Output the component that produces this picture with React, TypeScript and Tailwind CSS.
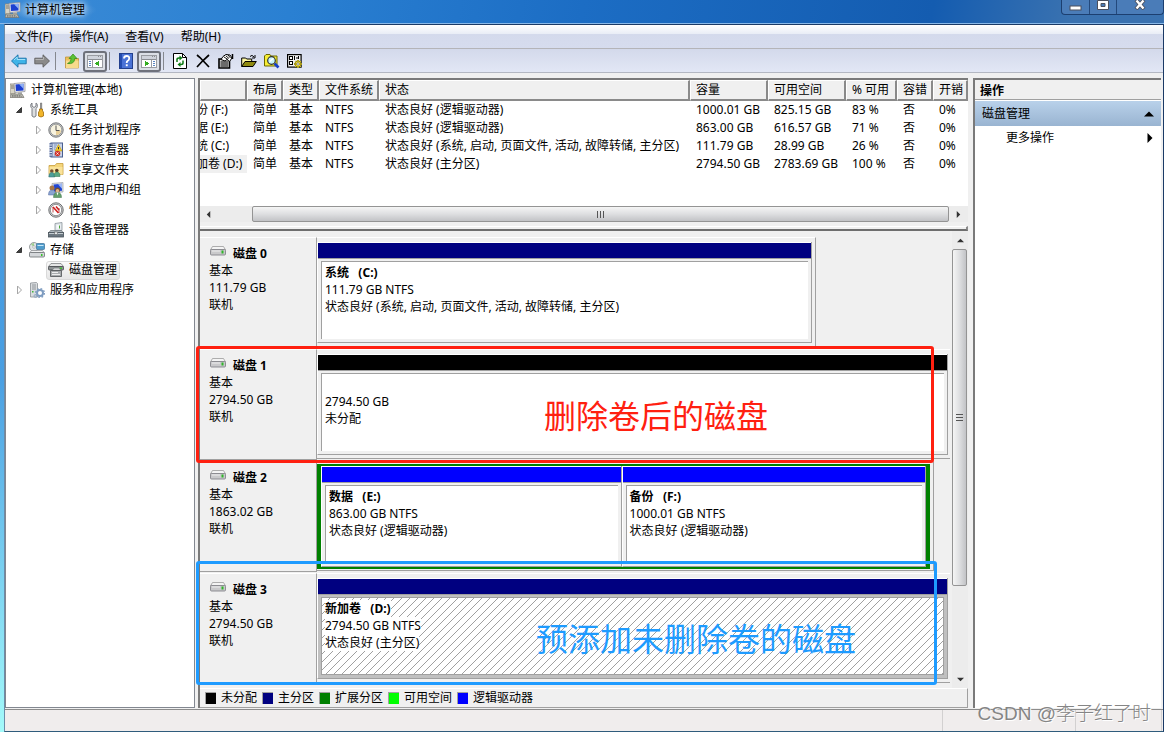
import { Fragment, type ReactNode } from 'react';

/* ---------- icons ---------- */

function ComputerIcon() {
  return (
    <svg viewBox="0 0 16 16" className="size-4 shrink-0" aria-hidden="true">
      <rect x="0" y="2" width="5" height="10" fill="#d8d4c6" stroke="#8a877c" strokeWidth=".8" />
      <path d="M1 4h3M1 6h3" stroke="#77756b" />
      <path d="M4 1.5l11-1v9l-10 1z" fill="#e8e8ea" stroke="#9a9aa0" strokeWidth=".8" />
      <path d="M5.5 2.5l8-.7v6.6l-7.5.7z" fill="#1c3fd0" />
      <path d="M9 2.3l4.5-.5v5z" fill="#8fb0f4" />
      <path d="M8 10h4v2H8z" fill="#b5b5b5" />
      <path d="M1 12h11l2 3.5H0z" fill="#b9b8b0" stroke="#77766f" strokeWidth=".7" />
      <path d="M2 13.5h9M2 14.7h10" stroke="#6d6d68" strokeWidth=".7" strokeDasharray="1.5 .8" />
    </svg>
  );
}

function ToolsIcon() {
  return (
    <svg viewBox="0 0 16 16" className="size-4 shrink-0" aria-hidden="true">
      <path d="M3 1v3l2 1.5L7 4V1c1.8 1 2 4.200 0 5.500V14q-2 2.500-4 0V6.500C1.200 5 1.200 2 3 1z" fill="#dcdee0" stroke="#6f7378" strokeWidth=".9" />
      <path d="M11.500 1h1.200v6h-1.200z" fill="#9a9a9a" stroke="#666" strokeWidth=".6" />
      <path d="M10.500 7h3v2l1 1v4q-2.500 2-5 0v-4l1-1z" fill="#f1b52a" stroke="#a06c0c" strokeWidth=".8" />
    </svg>
  );
}

function ClockIcon() {
  return (
    <svg viewBox="0 0 16 16" className="size-4 shrink-0" aria-hidden="true">
      <circle cx="8" cy="8" r="7.200" fill="#c6c8ca" stroke="#77797b" />
      <circle cx="8" cy="8" r="5.800" fill="#f8f3df" stroke="#8e9092" strokeWidth=".8" />
      <path d="M8 8.500h5A5 5 0 0 1 8 13z" fill="#e8cf98" />
      <path d="M8 3.500V8.500h3.500" stroke="#555" fill="none" />
    </svg>
  );
}

function EventIcon() {
  return (
    <svg viewBox="0 0 16 16" className="size-4 shrink-0" aria-hidden="true">
      <rect x="3" y="1" width="11.500" height="14" fill="#c9d5ea" stroke="#4a5f90" />
      <rect x="1.500" y="1" width="3" height="14" fill="#5b6f9e" />
      <path d="M1 3h3M1 5.500h3M1 8h3M1 10.500h3M1 13h3" stroke="#dfe5f2" />
      <path d="M6 3h3M6 5h2M6 7h1M6 13h1" stroke="#7085b4" strokeWidth=".8" />
      <path d="M10.500 2.500L14 9H7z" fill="#f5cd28" stroke="#b99412" strokeWidth=".6" />
      <path d="M10.500 5v2.300" stroke="#333" />
      <circle cx="9.500" cy="11.500" r="2.800" fill="#d0342c" />
      <path d="M8.500 10.500l2 2m0-2l-2 2" stroke="#fff" strokeWidth=".9" />
    </svg>
  );
}

function SharedFolderIcon() {
  return (
    <svg viewBox="0 0 16 16" className="size-4 shrink-0" aria-hidden="true">
      <path d="M1 3.500h6L8.500 1.500H15v11H1z" fill="#f4d57a" stroke="#c79d3c" strokeWidth=".8" />
      <path d="M1.500 5H14.500v7.500h-13z" fill="#f9e29a" />
      <circle cx="3.800" cy="9" r="1.800" fill="#7a5232" />
      <circle cx="8.800" cy="8.500" r="1.800" fill="#5c3c22" />
      <path d="M.8 15q0-4.500 3-4.500t3 4.500z" fill="#4d9e9a" stroke="#2f6a70" strokeWidth=".5" />
      <path d="M6 14.500q0-4.500 3-4.500t3 4.500z" fill="#5aa884" stroke="#2f7050" strokeWidth=".5" />
    </svg>
  );
}

function UsersIcon() {
  return (
    <svg viewBox="0 0 16 16" className="size-4 shrink-0" aria-hidden="true">
      <path d="M4 1.500l11-1v9.500l-10 .5z" fill="#dfe2e8" stroke="#9a9ea8" strokeWidth=".7" />
      <path d="M5.500 2.500l8.500-.7v7l-8 .6z" fill="#2046d2" />
      <path d="M10 2.200l4-.4v5z" fill="#9cb8f6" />
      <circle cx="4" cy="6" r="2.500" fill="#a87746" />
      <path d="M.5 13q0-5 3.500-5t3.500 5z" fill="#8ba4d2" stroke="#52699c" strokeWidth=".5" />
      <circle cx="9.500" cy="8" r="2.500" fill="#79502c" />
      <circle cx="9.500" cy="8.700" r="1.700" fill="#e0b48a" />
      <path d="M5.500 15.500q0-5 4-5t4 5z" fill="#63a06c" stroke="#3f7048" strokeWidth=".5" />
      <path d="M8.500 10.500h2l-1 3z" fill="#fff" />
    </svg>
  );
}

function PerformanceIcon() {
  return (
    <svg viewBox="0 0 16 16" className="size-4 shrink-0" aria-hidden="true">
      <circle cx="8" cy="8" r="7.200" fill="#d3d4d5" stroke="#6c6e70" />
      <circle cx="8" cy="8" r="5.700" fill="#fff" stroke="#77797b" strokeWidth=".8" />
      <path d="M5 10.500V5M11 11V6" stroke="#b24040" fill="none" strokeWidth=".9" />
      <path d="M5 5l5.500 6M8 4.500l3 3.500" stroke="#cf2020" strokeWidth="1.600" />
    </svg>
  );
}

function DeviceIcon() {
  return (
    <svg viewBox="0 0 16 16" className="size-4 shrink-0" aria-hidden="true">
      <path d="M7 1.500l7-1v8H7z" fill="#dfe5ea" stroke="#8b949b" strokeWidth=".8" />
      <path d="M8.500 3l4-.6v4.300h-4z" fill="#f6f8fa" />
      <path d="M11.500 3.500v3" stroke="#49a53a" />
      <path d="M2.500 8.500h11L15.500 11H.5z" fill="#aeb7bd" stroke="#6a7379" strokeWidth=".7" />
      <rect x=".5" y="10.500" width="15" height="4.500" fill="#6b7780" stroke="#49535a" strokeWidth=".8" />
      <path d="M1 11.500h14" stroke="#c3cbd0" />
      <rect x="6.500" y="10" width="3" height="2.500" fill="#e7eaec" stroke="#555" strokeWidth=".5" />
    </svg>
  );
}

function StorageIcon() {
  return (
    <svg viewBox="0 0 16 16" className="size-4 shrink-0" aria-hidden="true">
      <circle cx="5" cy="5" r="4.500" fill="#dfe4e6" stroke="#84898c" strokeWidth=".8" />
      <path d="M5 5L2 2.500A4 4 0 0 1 5 1z" fill="#9fd18f" />
      <circle cx="5" cy="5" r="1.300" fill="#fff" stroke="#888" strokeWidth=".5" />
      <rect x="7.500" y="1.500" width="8" height="6" rx=".8" fill="#4f9ccc" stroke="#3a6f96" strokeWidth=".7" />
      <path d="M8.500 3.500h6" stroke="#c7e6f7" />
      <path d="M2.500 8.500h11l2 2.500H.5z" fill="#f0f1f2" stroke="#898d90" strokeWidth=".7" />
      <rect x=".5" y="10.500" width="15" height="4.500" rx="1" fill="#d4d7da" stroke="#696e72" strokeWidth=".8" />
      <rect x="12" y="12" width="1.500" height="2" fill="#37c52a" />
    </svg>
  );
}

function DiskManagementIcon() {
  return (
    <svg viewBox="0 0 16 16" className="size-4 shrink-0" aria-hidden="true">
      <path d="M3 1.500h10l2.500 3H.5z" fill="#e5e6e6" stroke="#707375" strokeWidth=".7" />
      <rect x=".5" y="4.500" width="15" height="3.500" rx=".8" fill="#8e9294" stroke="#45494b" strokeWidth=".8" />
      <rect x="11.500" y="5.500" width="2.500" height="1.500" fill="#3dbd30" />
      <path d="M4 8.500L6 6h5l2 2.500z" fill="#d5d7d8" stroke="#707375" strokeWidth=".6" />
      <path d="M2.500 8.500h11v6h-11z" fill="#a9acae" stroke="#4d5153" strokeWidth=".8" />
      <path d="M4 10.500h6M4 12.500h8" stroke="#eceded" />
    </svg>
  );
}

function ServicesIcon() {
  return (
    <svg viewBox="0 0 16 16" className="size-4 shrink-0" aria-hidden="true">
      <path d="M1.500 1l6-.5 1 1v13.500h-7z" fill="#d9dcdf" stroke="#8a8f94" strokeWidth=".8" />
      <path d="M3 3h4M3 5h4M3 7h4" stroke="#7d8388" strokeWidth=".8" />
      <rect x="3" y="9" width="1.500" height="1.500" fill="#3fb33a" />
      <circle cx="11" cy="11" r="3" fill="none" stroke="#7e9cc0" strokeWidth="2" />
      <circle cx="11" cy="11" r="4.400" fill="none" stroke="#7e9cc0" strokeWidth="1.300" strokeDasharray="1.700 1.750" />
      <circle cx="6.500" cy="14" r="1.500" fill="none" stroke="#93a9c4" />
    </svg>
  );
}

function DriveIcon() {
  return (
    <svg viewBox="0 0 16 10" className="h-[10px] w-4 shrink-0" aria-hidden="true">
      <path d="M2.500.5h11l2 3.500H.5z" fill="#f4f4f4" stroke="#9b9b9b" strokeWidth=".8" />
      <rect x=".5" y="3.500" width="15" height="5.500" rx="1" fill="#c9c9cb" stroke="#85858a" strokeWidth=".9" />
      <path d="M2 5h8" stroke="#ededee" />
      <rect x="11.500" y="4.500" width="2" height="3" fill="#2fb529" />
    </svg>
  );
}

function ArrowIcon({ forward = false }: { forward?: boolean }) {
  return (
    <svg viewBox="0 0 16 14" className="h-[14px] w-4" aria-hidden="true">
      {forward ? (
        <path d="M15.500 7L9 .8v3.400H.8v5.600H9v3.400z" fill="#8a8a8a" stroke="#5e5e5e" strokeWidth=".9" />
      ) : (
        <path d="M.5 7L7 .8v3.400h8.200v5.600H7v3.400z" fill="#3fb4e8" stroke="#1770a8" strokeWidth=".9" />
      )}
      <path d={forward ? 'M1.500 5.500H9.500V3' : 'M3 6l3.200-3v2.500h8'} fill="none" stroke={forward ? '#b5b5b5' : '#a5e2fa'} />
    </svg>
  );
}

function UpFolderIcon() {
  return (
    <svg viewBox="0 0 16 16" className="size-4" aria-hidden="true">
      <path d="M1.500 4h5l1 1.500h7V15h-13z" fill="#eec05c" stroke="#b88a2c" strokeWidth=".7" />
      <path d="M2 7.500h12.500V15H2z" fill="#f8db8c" />
      <path d="M3.500 10.500q3.500-1 3.700-5H5L9 1l4 4.500h-2.300Q10.500 11.500 3.500 10.500z" fill="#5cc236" stroke="#2f8a18" strokeWidth=".7" />
    </svg>
  );
}

function PaneIcon({ right = false }: { right?: boolean }) {
  return (
    <svg viewBox="0 0 16 13" className="h-[13px] w-4" aria-hidden="true" shapeRendering="crispEdges">
      <rect x=".5" y=".5" width="15" height="12" fill="#fff" stroke="#9a9ca2" />
      <path d="M1 2.500h14" stroke="#d0d3db" strokeWidth="3" />
      <path d="M11 1.500h1M13 1.500h1M1 4.500h14" stroke="#8b8d92" />
      {right ? <path d="M10.500 5v7" stroke="#9a9ca2" /> : <path d="M5.500 5v7" stroke="#9a9ca2" />}
      {right ? (
        <path d="M12 6.500h2M12 8.500h2M12 10.500h2" stroke="#5b86c4" />
      ) : (
        <path d="M2 6.500h2M2 8.500h2M2 10.500h2" stroke="#5b86c4" />
      )}
      <path d={right ? 'M4 5.500v6l4-3z' : 'M12 5.500v6L8 8.500z'} fill="#35ad22" />
    </svg>
  );
}

function HelpIcon() {
  return (
    <svg viewBox="0 0 14 16" className="h-4 w-[14px]" aria-hidden="true">
      <rect x=".5" y=".5" width="13" height="15" fill="#4a72d6" stroke="#23408e" />
      <rect x="1" y="1" width="2" height="14" fill="#234bb0" />
      <path d="M5 5.500q0-2.500 2.700-2.500T10.200 5.500Q10.200 7 8.500 8q-.8.600-.8 2" fill="none" stroke="#fff" strokeWidth="1.800" />
      <rect x="6.800" y="11.300" width="1.900" height="1.900" fill="#fff" />
    </svg>
  );
}

function RefreshIcon() {
  return (
    <svg viewBox="0 0 14 16" className="h-4 w-[14px]" aria-hidden="true">
      <path d="M.5.5h9l4 4v11H.5z" fill="#fff" stroke="#000" />
      <path d="M9.500.5v4h4" fill="none" stroke="#000" />
      <path d="M4 9V6.500q0-1.500 2-1.500h1M10 7.500V10q0 1.500-2 1.500H7" fill="none" stroke="#0b7a12" strokeWidth="1.500" />
      <path d="M6.500 2.500v5L9.500 5zM7.500 9v5L4.500 11.500z" fill="#0b7a12" />
    </svg>
  );
}

function DeleteIcon() {
  return (
    <svg viewBox="0 0 14 14" className="size-[14px]" aria-hidden="true">
      <path d="M1 1l3 2.500L13 13M13 1L7 6.500 1 13" fill="none" stroke="#000" strokeWidth="1.700" />
    </svg>
  );
}

function PropertiesIcon() {
  return (
    <svg viewBox="0 0 16 16" className="size-4" aria-hidden="true">
      <path d="M1 6h10.500v9H1z" fill="#d6d6d6" stroke="#000" strokeWidth="1.600" />
      <path d="M2.500 9h7.500M2.500 11h7.500M2.500 13h7.500" stroke="#000" />
      <path d="M3 6.500L5 3.500l3-2 4 .5 2 3-2.500 3.500L9 6.500 7 8z" fill="#fff" stroke="#000" />
      <path d="M6 4l4 2.500M8 3l3 2.500M10 2l2.500 3" stroke="#000" strokeWidth=".9" />
      <path d="M14.500 1v5" stroke="#000" strokeWidth="1.500" />
    </svg>
  );
}

function OpenIcon() {
  return (
    <svg viewBox="0 0 16 14" className="h-[14px] w-4" aria-hidden="true">
      <path d="M.7 12.500V4h4l1 1h5v3" fill="#fbf6a0" stroke="#000" />
      <path d="M.7 12.500L4 7.500h11.300L12 12.500z" fill="#8f8a10" stroke="#000" />
      <path d="M9 2.500q2-2.500 4 .5m1-2v3h-3" fill="none" stroke="#000" />
    </svg>
  );
}

function FindIcon() {
  return (
    <svg viewBox="0 0 16 16" className="size-4" aria-hidden="true">
      <path d="M.5 13V3L2 1.500h4L7 3h6V13z" fill="#f6ed35" stroke="#6d6800" />
      <circle cx="7.500" cy="7.500" r="3.800" fill="#c7f4fb" stroke="#303030" strokeWidth="1.200" />
      <path d="M6 8.500L9 5.500" stroke="#fff" strokeWidth="1.300" />
      <path d="M10.500 10.500l4 4" stroke="#1740c8" strokeWidth="2.600" />
    </svg>
  );
}

function SettingsIcon() {
  return (
    <svg viewBox="0 0 16 16" className="size-4" aria-hidden="true">
      <rect x=".6" y="1.600" width="13.500" height="12.500" fill="#f2f2f2" stroke="#000" strokeWidth="1.200" />
      <rect x="2.500" y="3.500" width="3" height="3" fill="#fff" stroke="#000" />
      <rect x="2.500" y="8.500" width="3" height="3" fill="#fff" stroke="#000" />
      <path d="M7.500 3v4M9 5h2M11.500 3v3" stroke="#000" />
      <path d="M11 7v8M7 11h8M8.300 8.300l5.400 5.400M13.700 8.300l-5.400 5.400" stroke="#5a5200" strokeWidth="2" />
      <path d="M11 7v8M7 11h8M8.300 8.300l5.400 5.400M13.700 8.300l-5.400 5.400" stroke="#f4e02c" strokeWidth="1.200" />
      <circle cx="11" cy="11" r="1.200" fill="#fff" stroke="#555" strokeWidth=".6" />
    </svg>
  );
}

function Triangle({ dir, className }: { dir: 'up' | 'down' | 'left' | 'right'; className: string }) {
  const shape = { up: 'M4 2L8 6H0z', down: 'M0 2h8L4 6z', left: 'M6 0v8L2 4z', right: 'M2 0l4 4-4 4z' }[dir];
  return (
    <svg viewBox="0 0 8 8" className={className} aria-hidden="true">
      <path d={shape} fill="currentColor" />
    </svg>
  );
}

/* ---------- toolbar ---------- */

function Tool({ label, pressed = false, children }: { label: string; pressed?: boolean; children: ReactNode }) {
  return (
    <button
      type="button"
      aria-label={label}
      aria-pressed={pressed || undefined}
      className={
        pressed
          ? 'flex h-[21px] w-6 items-center justify-center rounded-[3px] border-2 border-[#6e717b] bg-[#dcdfe6]'
          : 'flex h-[21px] w-[23px] items-center justify-center'
      }
    >
      {children}
    </button>
  );
}

function Separator() {
  return <div className="mr-1 ml-[2px] h-[18px] w-px bg-[#85888f]" />;
}

/* ---------- navigation tree ---------- */

type Node = { label: string; level: 0 | 1 | 2; state?: 'open' | 'closed'; icon: ReactNode; selected?: boolean };

const nodes: Node[] = [
  { label: '计算机管理(本地)', level: 0, icon: <ComputerIcon /> },
  { label: '系统工具', level: 1, state: 'open', icon: <ToolsIcon /> },
  { label: '任务计划程序', level: 2, state: 'closed', icon: <ClockIcon /> },
  { label: '事件查看器', level: 2, state: 'closed', icon: <EventIcon /> },
  { label: '共享文件夹', level: 2, state: 'closed', icon: <SharedFolderIcon /> },
  { label: '本地用户和组', level: 2, state: 'closed', icon: <UsersIcon /> },
  { label: '性能', level: 2, state: 'closed', icon: <PerformanceIcon /> },
  { label: '设备管理器', level: 2, icon: <DeviceIcon /> },
  { label: '存储', level: 1, state: 'open', icon: <StorageIcon /> },
  { label: '磁盘管理', level: 2, icon: <DiskManagementIcon />, selected: true },
  { label: '服务和应用程序', level: 1, state: 'closed', icon: <ServicesIcon /> },
];

const indents = { 0: 'pl-[2px]', 1: 'pl-[9px]', 2: 'pl-[28px]' };

function Tree() {
  return (
    <nav className="w-[190px] shrink-0 border border-[#828790] bg-white pt-px">
      <ul>
        {nodes.map((n) => (
          <li key={n.label} className={`flex h-5 items-center ${indents[n.level]}`}>
            {n.level > 0 && (
              <span className="flex w-3 shrink-0 items-center">
                {n.state === 'open' && (
                  <svg viewBox="0 0 8 8" className="size-2" aria-hidden="true">
                    <path d="M6.500 1.500v5h-5z" fill="#404040" stroke="#222" strokeWidth=".8" />
                  </svg>
                )}
                {n.state === 'closed' && (
                  <svg viewBox="0 0 8 10" className="h-[10px] w-2" aria-hidden="true">
                    <path d="M2.500 1l4 4-4 4z" fill="#fff" stroke="#a6a6a6" />
                  </svg>
                )}
              </span>
            )}
            <button
              type="button"
              className={
                n.selected
                  ? 'flex h-[19px] items-center gap-[5px] rounded-[3px] border border-[#d9d9d9] bg-gradient-to-b from-[#fafafa] to-[#e6e6e6] pr-[2px] pl-px whitespace-nowrap'
                  : 'flex h-5 items-center gap-[5px] px-[2px] whitespace-nowrap'
              }
            >
              {n.icon}
              {n.label}
            </button>
          </li>
        ))}
      </ul>
    </nav>
  );
}

/* ---------- volume table ---------- */

const columns = [
  { title: '', width: 'w-[47px]' },
  { title: '布局', width: 'w-[36px]' },
  { title: '类型', width: 'w-[36px]' },
  { title: '文件系统', width: 'w-[60px]' },
  { title: '状态', width: '' },
  { title: '容量', width: 'w-[78px]' },
  { title: '可用空间', width: 'w-[78px]' },
  { title: '% 可用', width: 'w-[51px]' },
  { title: '容错', width: 'w-[36px]' },
  { title: '开销', width: 'w-[35px]' },
];

const volumes = [
  ['备份 (F:)', '简单', '基本', 'NTFS', '状态良好 (逻辑驱动器)', '1000.01 GB', '825.15 GB', '83 %', '否', '0%'],
  ['数据 (E:)', '简单', '基本', 'NTFS', '状态良好 (逻辑驱动器)', '863.00 GB', '616.57 GB', '71 %', '否', '0%'],
  ['系统 (C:)', '简单', '基本', 'NTFS', '状态良好 (系统, 启动, 页面文件, 活动, 故障转储, 主分区)', '111.79 GB', '28.99 GB', '26 %', '否', '0%'],
  ['新加卷 (D:)', '简单', '基本', 'NTFS', '状态良好 (主分区)', '2794.50 GB', '2783.69 GB', '100 %', '否', '0%'],
];

function VolumeTable() {
  return (
    <table className="w-full table-fixed border-separate border-spacing-0 text-left">
      <colgroup>
        {columns.map((c) => (
          <col key={c.title} className={c.width} />
        ))}
      </colgroup>
      <thead>
        <tr className="h-[21px]">
          {columns.map((c) => (
            <th
              key={c.title}
              className="overflow-hidden border-t border-r-2 border-b-2 border-l border-t-white border-r-[#8a8a8a] border-b-[#8a8a8a] border-l-white bg-[#f0f0f0] p-0 pl-[5px] leading-[18px] font-normal whitespace-nowrap"
            >
              {c.title}
            </th>
          ))}
        </tr>
      </thead>
      <tbody>
        {volumes.map((row, r) => (
          <tr key={row[0]} className="h-[18px]">
            {row.map((cell, i) =>
              i === 0 ? (
                <td key={i} className={r === 3 ? 'overflow-hidden bg-[#f0f0f0] p-0' : 'overflow-hidden p-0'}>
                  <div className="-ml-4 leading-[18px] whitespace-nowrap">{cell}</div>
                </td>
              ) : (
                <td key={i} className="p-0 pl-[6px] leading-[18px] whitespace-nowrap">
                  {cell}
                </td>
              ),
            )}
          </tr>
        ))}
      </tbody>
    </table>
  );
}

function HorizontalScroll() {
  return (
    <div className="flex h-4 shrink-0 items-stretch bg-[#ececec]">
      <button type="button" aria-label="向左滚动" className="flex w-[17px] items-center justify-center text-[#333]">
        <Triangle dir="left" className="size-[7px]" />
      </button>
      <div className="ml-[35px] flex flex-1 items-center justify-center gap-[2px] rounded-[2px] border border-[#949494] bg-gradient-to-b from-[#f5f5f5] via-[#dedfe1] to-[#c2c3c6]">
        <span className="h-[7px] w-px bg-[#555]" />
        <span className="h-[7px] w-px bg-[#555]" />
        <span className="h-[7px] w-px bg-[#555]" />
      </div>
      <button type="button" aria-label="向右滚动" className="flex w-[19px] items-center justify-center text-[#333]">
        <Triangle dir="right" className="size-[7px]" />
      </button>
    </div>
  );
}

function VerticalScroll() {
  return (
    <div className="flex w-4 shrink-0 flex-col bg-[#ececec]">
      <button type="button" aria-label="向上滚动" className="flex h-[18px] items-center justify-center text-[#333]">
        <Triangle dir="up" className="size-[7px]" />
      </button>
      <div className="flex w-[15px] flex-[337_1_0%] flex-col items-center justify-center gap-[2px] rounded-[2px] border border-[#949494] bg-gradient-to-r from-[#f5f5f5] via-[#dedfe1] to-[#c2c3c6]">
        <span className="h-px w-[7px] bg-[#555]" />
        <span className="h-px w-[7px] bg-[#555]" />
        <span className="h-px w-[7px] bg-[#555]" />
      </div>
      <div className="flex-[86_1_0%]" />
      <button type="button" aria-label="向下滚动" className="flex h-[17px] items-center justify-center text-[#333]">
        <Triangle dir="down" className="size-[7px]" />
      </button>
    </div>
  );
}

/* ---------- graphical disk view ---------- */

function Partition({
  name,
  lines,
  bar,
  grow = 'flex-1',
  hatched = false,
}: {
  name?: string;
  lines: string[];
  bar: string;
  grow?: string;
  hatched?: boolean;
}) {
  return (
    <div className={`flex h-[101px] min-w-0 flex-col border-r border-b border-l border-r-[#a0a0a0] border-b-[#a0a0a0] border-l-white ${grow} ${hatched ? 'bg-[#c0c0c0]' : ''}`}>
      <div className={`h-[17px] shrink-0 border-t border-b border-t-white border-b-[#a0a0a0] ${bar}`} />
      <div className="flex flex-1 px-[3px] pt-[2px] pb-[3px]">
        <div
          className={
            hatched
              ? 'relative flex-1 overflow-hidden border border-[#a0a0a0] bg-white'
              : 'flex-1 overflow-hidden border-t border-l border-[#a0a0a0] bg-white'
          }
        >
          {hatched && (
            <svg className="absolute inset-0 size-full" aria-hidden="true" shapeRendering="crispEdges">
              <defs>
                <pattern id="hatch" width="8" height="8" patternUnits="userSpaceOnUse">
                  <path d="M0 7h1v1H0zM1 6h1v1H1zM2 5h1v1H2zM3 4h1v1H3zM4 3h1v1H4zM5 2h1v1H5zM6 1h1v1H6zM7 0h1v1H7z" fill="#a0a0a0" />
                </pattern>
              </defs>
              <rect width="100%" height="100%" fill="url(#hatch)" />
            </svg>
          )}
          <div className="relative flex flex-col items-start pt-[2px] pl-[3px] leading-[17px] whitespace-pre">
            {name ? (
              <b className={hatched ? 'bg-white' : ''}>{name}</b>
            ) : (
              <span className="h-[17px]" />
            )}
            {lines.map((l) => (
              <span key={l} className={hatched ? 'bg-white' : ''}>
                {l}
              </span>
            ))}
          </div>
        </div>
      </div>
    </div>
  );
}

function DiskRow({ name, size, children }: { name: string; size: string; children: ReactNode }) {
  return (
    <div className="relative flex h-28 items-start">
      <div className="h-[111px] w-[117px] shrink-0 border-t border-r border-b border-t-white border-r-[#a0a0a0] border-b-[#a0a0a0] pt-[7px] pl-[9px] leading-[17px]">
        <div className="flex h-[17px] gap-[7px]">
          <span className="pt-px pl-px">
            <DriveIcon />
          </span>
          <b>{name}</b>
        </div>
        <div>基本</div>
        <div>{size}</div>
        <div>联机</div>
      </div>
      {children}
    </div>
  );
}

function DiskView() {
  return (
    <div className="min-w-0 flex-1">
      <DiskRow name="磁盘 0" size="111.79 GB">
        <div className="flex h-[110px] flex-[499_1_0%] border-t border-r border-b border-t-white border-r-[#a0a0a0] border-b-[#a0a0a0] pt-1 pr-[3px]">
          <Partition name="系统   (C:)" lines={['111.79 GB NTFS', '状态良好 (系统, 启动, 页面文件, 活动, 故障转储, 主分区)']} bar="bg-[#000080]" />
        </div>
        <div className="flex-[135_1_0%]" />
      </DiskRow>

      <DiskRow name="磁盘 1" size="2794.50 GB">
        <div className="flex h-[110px] flex-1 border-t border-b border-t-white border-b-[#a0a0a0] pt-1 pr-[2px]">
          <Partition lines={['2794.50 GB', '未分配']} bar="bg-black" />
        </div>
        <div className="absolute -top-[3px] right-4 -left-[4px] z-10 h-[117px] rounded-[3px] border-[3px] border-[#ff2010]">
          <p className="pt-[43px] pl-[345px] text-[32px] leading-[48px] whitespace-nowrap text-[#ff2010]">删除卷后的磁盘</p>
        </div>
      </DiskRow>

      <DiskRow name="磁盘 2" size="1863.02 GB">
        <div className="flex h-[110px] flex-[618_1_0%] border-t border-r border-b border-t-white border-r-[#a0a0a0] border-b-[#a0a0a0] pt-[2px] pr-[3px]">
          <div className="flex h-[105px] min-w-0 flex-1 border-x-4 border-y-2 border-[#008000] bg-[#f0f0f0]">
            <Partition name="数据   (E:)" lines={['863.00 GB NTFS', '状态良好 (逻辑驱动器)']} bar="bg-[#0000ff]" grow="flex-[301_1_0%]" />
            <Partition name="备份   (F:)" lines={['1000.01 GB NTFS', '状态良好 (逻辑驱动器)']} bar="bg-[#0000ff]" grow="flex-[305_1_0%]" />
          </div>
        </div>
        <div className="flex-[16_1_0%]" />
      </DiskRow>

      <DiskRow name="磁盘 3" size="2794.50 GB">
        <div className="flex h-[110px] flex-1 border-t border-b border-t-white border-b-[#a0a0a0] pt-1 pr-[2px]">
          <Partition name="新加卷   (D:)" lines={['2794.50 GB NTFS', '状态良好 (主分区)']} bar="bg-[#000080]" hatched />
        </div>
        <div className="absolute -top-[12px] right-[13px] -left-[4px] z-10 h-[124px] rounded-[3px] border-[3px] border-[#1e9bff]">
          <p className="pt-[51px] pl-[337px] text-[32px] leading-[48px] whitespace-nowrap text-[#1e9bff]">预添加未删除卷的磁盘</p>
        </div>
      </DiskRow>
    </div>
  );
}

const legend = [
  { label: '未分配', color: 'bg-black' },
  { label: '主分区', color: 'bg-[#000080]' },
  { label: '扩展分区', color: 'bg-[#008000]' },
  { label: '可用空间', color: 'bg-[#00ff00]' },
  { label: '逻辑驱动器', color: 'bg-[#0000ff]' },
];

/* ---------- window ---------- */

export default function App() {
  return (
    <div className="flex min-h-screen flex-col bg-white pr-[2px] font-['Noto_Sans','Noto_Sans_CJK_SC',sans-serif] text-[12px] leading-4 text-black">
      <header className="flex h-6 shrink-0 items-start justify-between border-b border-[#8ab9e8] bg-[linear-gradient(100deg,#3b8bd6,#2a80d2_25%,#1c6dc4_50%,#145cb0_80%,#3a72b0_92%)] pl-[5px]">
        <h1 className="flex h-5 items-center gap-1 bg-[radial-gradient(closest-side,rgba(255,255,255,0.35),transparent)] pr-3">
          <ComputerIcon />
          <span className="[text-shadow:0_0_8px_#fff,0_0_5px_#cfe4fa]">计算机管理</span>
        </h1>
        <div className="flex h-[15px] rounded-b-[4px] border-x border-b border-[#1c3f70] bg-[#4a7cb8] text-white">
          <button type="button" aria-label="最小化" className="flex w-7 items-center justify-center border-r border-[#23497c]">
            <svg viewBox="0 0 13 10" className="h-[10px] w-[13px]" aria-hidden="true">
              <rect x="1" y="4" width="11" height="4" fill="#fff" stroke="#4b4f5c" />
            </svg>
          </button>
          <button type="button" aria-label="最大化" className="flex w-[27px] items-start justify-center border-r border-[#23497c]">
            <svg viewBox="0 0 12 10" className="h-[10px] w-3" aria-hidden="true">
              <path d="M.5.500h11v9H.5zM4 3.500v3h4v-3z" fill="#fff" fillRule="evenodd" stroke="#4b4f5c" />
            </svg>
          </button>
          <button type="button" aria-label="关闭" className="flex w-[46px] items-start justify-center">
            <svg viewBox="0 0 12 10" className="h-[10px] w-3" aria-hidden="true">
              <path d="M2 0l8 9M10 0L2 9" stroke="#4b4f5c" strokeWidth="4" />
              <path d="M2.500.500l7 8M9.500.500l-7 8" stroke="#fff" strokeWidth="2.400" />
            </svg>
          </button>
        </div>
      </header>

      <div className="flex flex-1 bg-gradient-to-b from-[#3f93dc] via-[#4a9fe2] to-[#a4fafa] pl-1">
        <div className="flex min-w-0 flex-1 flex-col border border-t-[#1b3a66] border-r-[#1b3a66] border-b-[#2f5c7c] border-l-[#6b8ba8] bg-[#f0f0f0]">
          <div className="flex h-6 shrink-0 items-center gap-[17px] border-b border-[#b4b4b8] bg-[linear-gradient(#ffffff,#e9edf6_9px,#d4daec_9px,#d6dcee)] pt-px pl-[10px]">
            {['文件(F)', '操作(A)', '查看(V)', '帮助(H)'].map((m) => (
              <button key={m} type="button">
                {m}
              </button>
            ))}
          </div>

          <div className="flex h-6 shrink-0 items-center border-b border-[#b3b7c2] bg-gradient-to-b from-[#d3d9eb] to-[#e2e7f5] pt-px pl-[2px]">
            <Tool label="后退">
              <ArrowIcon />
            </Tool>
            <Tool label="前进">
              <ArrowIcon forward />
            </Tool>
            <Separator />
            <Tool label="上一级">
              <UpFolderIcon />
            </Tool>
            <Tool label="显示或隐藏控制台树" pressed>
              <PaneIcon />
            </Tool>
            <Separator />
            <Tool label="帮助">
              <HelpIcon />
            </Tool>
            <Tool label="显示或隐藏操作窗格" pressed>
              <PaneIcon right />
            </Tool>
            <Separator />
            <Tool label="刷新">
              <RefreshIcon />
            </Tool>
            <Tool label="删除">
              <DeleteIcon />
            </Tool>
            <Tool label="属性">
              <PropertiesIcon />
            </Tool>
            <Tool label="打开">
              <OpenIcon />
            </Tool>
            <Tool label="查找">
              <FindIcon />
            </Tool>
            <Tool label="设置">
              <SettingsIcon />
            </Tool>
          </div>

          <div className="flex flex-1 pt-[5px] pr-[2px]">
            <Tree />

            <main className="ml-[3px] flex min-w-0 flex-1 flex-col border-t-2 border-l-2 border-[#7a7a7a]">
              <section className="flex h-[142px] flex-col overflow-hidden bg-white">
                <div className="flex-1">
                  <VolumeTable />
                </div>
                <HorizontalScroll />
              </section>
              <div className="mt-1 h-[5px] border-t border-r-2 border-b-2 border-t-white border-r-[#8a8a8a] border-b-[#6e6e6e]" />

              <section className="flex flex-1 pt-[6px]">
                <DiskView />
                <div className="-mt-[6px] flex pl-[2px]">
                  <VerticalScroll />
                </div>
              </section>

              <footer className="flex h-5 shrink-0 items-center gap-[5px] border-t border-r border-b border-t-white border-r-[#a0a0a0] border-b-[#a0a0a0] pl-[5px]">
                {legend.map((l) => (
                  <Fragment key={l.label}>
                    <span className={`h-3 w-[11px] border-t border-l border-[#a0a0a0] ${l.color}`} />
                    <span>{l.label}</span>
                  </Fragment>
                ))}
              </footer>
            </main>

            <aside className="ml-[5px] w-[188px] shrink-0 border-t-2 border-l-2 border-[#7a7a7a] bg-white">
              <h2 className="h-5 border-b border-[#a0a0a0] bg-[#f0f0f0] pl-[5px] leading-[21px] font-bold">操作</h2>
              <button type="button" className="mt-px flex h-[25px] w-full items-center justify-between bg-gradient-to-b from-[#b9d1ea] to-[#99b4d1] pr-[7px] pl-[7px]">
                磁盘管理
                <Triangle dir="up" className="size-[10px]" />
              </button>
              <button type="button" className="flex h-6 w-full items-center justify-between pr-[6px] pl-[31px]">
                更多操作
                <Triangle dir="right" className="size-[10px]" />
              </button>
            </aside>
          </div>

          <div className="relative mt-px flex h-[22px] shrink-0 border-t border-[#8c8c8c] bg-[#f0eded] pr-px">
            <span className="flex-1" />
            <span className="w-[133px] border-l border-[#d2d0d0]" />
            <span className="w-[87px] border-x border-[#d2d0d0]" />
            <p className="absolute right-[12px] bottom-[5px] font-['Liberation_Sans','Noto_Sans_CJK_SC',sans-serif] text-[19px] leading-6 font-light whitespace-nowrap text-[#858585] [text-shadow:1px_1px_0_#ffffff]">
              CSDN @李子红了时
            </p>
          </div>
        </div>
      </div>
    </div>
  );
}
